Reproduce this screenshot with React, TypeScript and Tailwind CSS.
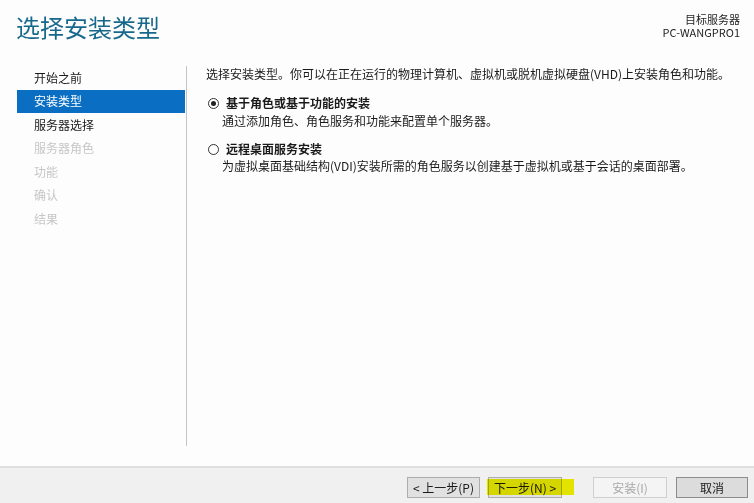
import React from "react";

const font = { fontFamily: '"Noto Sans CJK SC", "Microsoft YaHei", sans-serif' };

function Radio({ checked }: { checked: boolean }) {
  return (
    <span className="w-[11px] h-[11px] rounded-full border border-[#333] bg-white flex items-center justify-center shrink-0">
      {checked && <span className="w-[5px] h-[5px] rounded-full bg-[#222]" />}
    </span>
  );
}

export default function App() {
  const nav = [
    { t: "开始之前", s: "normal" },
    { t: "安装类型", s: "active" },
    { t: "服务器选择", s: "normal" },
    { t: "服务器角色", s: "disabled" },
    { t: "功能", s: "disabled" },
    { t: "确认", s: "disabled" },
    { t: "结果", s: "disabled" },
  ];
  return (
    <div className="w-[754px] h-[503px] bg-[#fdfdfd] flex flex-col overflow-hidden" style={font}>
      <div className="h-[66px] flex justify-between shrink-0">
        <div className="pl-[16px] pt-[11px] text-[24px] leading-[32px] text-[#17698c]">选择安装类型</div>
        <div className="pr-[14px] pt-[13px] flex flex-col items-end gap-[1px] text-[11px] leading-[12px] text-[#1e1e1e]">
          <div>目标服务器</div>
          <div>PC-WANGPRO1</div>
        </div>
      </div>
      <div className="flex flex-1 min-h-0">
        <div className="w-[187px] shrink-0 pb-[20px] flex flex-col">
          <div className="flex-1 border-r border-[#c4c4c4] pl-[17px] pr-[1px]">
            {nav.map((n) => (
              <div
                key={n.t}
                className={
                  "h-[23.5px] flex items-center pl-[17px] text-[12px] " +
                  (n.s === "active"
                    ? "bg-[#0a6fc2] text-white"
                    : n.s === "disabled"
                    ? "text-[#c6c6c6]"
                    : "text-[#1a1a1a]")
                }
              >
                {n.t}
              </div>
            ))}
          </div>
        </div>
        <div className="flex-1 pl-[19px] text-[12px] text-[#1a1a1a]">
          <div className="leading-[16px]">选择安装类型。你可以在正在运行的物理计算机、虚拟机或脱机虚拟硬盘(VHD)上安装角色和功能。</div>
          <div className="mt-[13px] flex items-center gap-[7px] pl-[2px] h-[16px]">
            <Radio checked />
            <span className="font-bold">基于角色或基于功能的安装</span>
          </div>
          <div className="pl-[16px] mt-[2px] leading-[16px]">通过添加角色、角色服务和功能来配置单个服务器。</div>
          <div className="mt-[12px] flex items-center gap-[7px] pl-[2px] h-[16px]">
            <Radio checked={false} />
            <span className="font-bold">远程桌面服务安装</span>
          </div>
          <div className="pl-[16px] mt-[1px] leading-[16px]">为虚拟桌面基础结构(VDI)安装所需的角色服务以创建基于虚拟机或基于会话的桌面部署。</div>
        </div>
      </div>
      <div className="h-[37px] shrink-0 border-t-2 border-[#dedede] bg-[#f0f0f0] flex items-start justify-end pr-[6px] pt-[9px] text-[12px]">
        <button className="w-[73px] h-[21px] border border-[#adadad] bg-[#e1e1e1] text-[#1a1a1a] flex items-center justify-center">
          &lt; 上一步(P)
        </button>
        <div className="relative ml-[8px]">
          <button className="w-[74px] h-[21px] border border-[#adadad] bg-[#e1e1e1] text-[#1a1a1a] flex items-center justify-center">
            下一步(N) &gt;
          </button>
          <div className="absolute left-[-1px] top-[2px] w-[87px] h-[16px] bg-[#f2f200] mix-blend-multiply" />
        </div>
        <button className="ml-[31px] w-[74px] h-[21px] border border-[#cfcfcf] bg-[#f4f4f4] text-[#a8a8a8] flex items-center justify-center">
          安装(I)
        </button>
        <button className="ml-[9px] w-[72px] h-[21px] border border-[#8c8c8c] bg-[#dcdcdc] text-[#1a1a1a] flex items-center justify-center">
          取消
        </button>
      </div>
    </div>
  );
}
